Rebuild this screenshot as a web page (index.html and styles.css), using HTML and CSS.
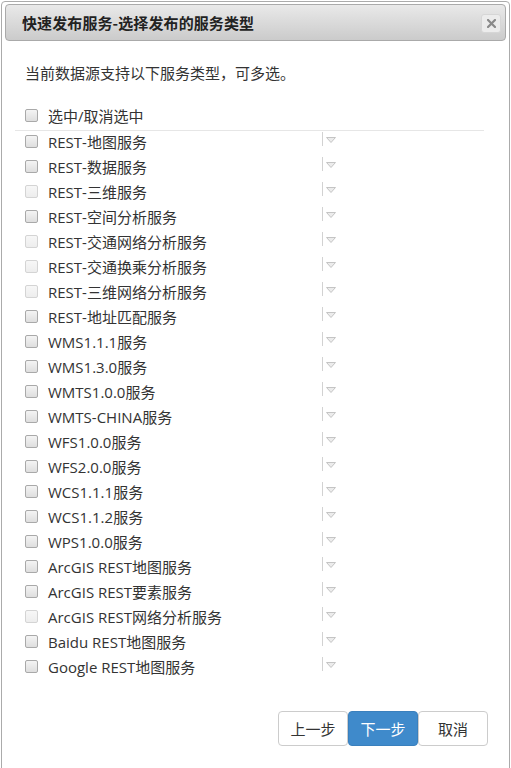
FILE: index.html
```html
<!DOCTYPE html>
<html lang="zh-CN">
<head>
<meta charset="utf-8">
<title>快速发布服务</title>
<link rel="stylesheet" href="styles.css">
</head>
<body>
<div class="dialog">
  <div class="titlebar">
    <span class="title">快速发布服务-选择发布的服务类型</span>
    <button class="close" type="button" aria-label="关闭">
      <svg width="9" height="9" viewBox="0 0 9 9"><path d="M1 1 L8 8 M8 1 L1 8" stroke="#8a8a8a" stroke-width="2.2" stroke-linecap="square"/></svg>
    </button>
  </div>
  <div class="body">
    <p class="intro">当前数据源支持以下服务类型，可多选。</p>
    <label class="all-row"><input type="checkbox" class="cb"><span>选中/取消选中</span></label>
    <ul class="list">
      <li class="row"><input type="checkbox" class="cb"><span class="name">REST-地图服务</span><span class="drop"><svg width="10" height="6" viewBox="0 0 10 6"><path d="M0.5 0.5 H9.5 L5 5.5 Z" fill="#ececec" stroke="#c4c4c4"/></svg></span></li>
      <li class="row"><input type="checkbox" class="cb"><span class="name">REST-数据服务</span><span class="drop"><svg width="10" height="6" viewBox="0 0 10 6"><path d="M0.5 0.5 H9.5 L5 5.5 Z" fill="#ececec" stroke="#c4c4c4"/></svg></span></li>
      <li class="row"><input type="checkbox" class="cb" disabled><span class="name">REST-三维服务</span><span class="drop"><svg width="10" height="6" viewBox="0 0 10 6"><path d="M0.5 0.5 H9.5 L5 5.5 Z" fill="#ececec" stroke="#c4c4c4"/></svg></span></li>
      <li class="row"><input type="checkbox" class="cb"><span class="name">REST-空间分析服务</span><span class="drop"><svg width="10" height="6" viewBox="0 0 10 6"><path d="M0.5 0.5 H9.5 L5 5.5 Z" fill="#ececec" stroke="#c4c4c4"/></svg></span></li>
      <li class="row"><input type="checkbox" class="cb" disabled><span class="name">REST-交通网络分析服务</span><span class="drop"><svg width="10" height="6" viewBox="0 0 10 6"><path d="M0.5 0.5 H9.5 L5 5.5 Z" fill="#ececec" stroke="#c4c4c4"/></svg></span></li>
      <li class="row"><input type="checkbox" class="cb" disabled><span class="name">REST-交通换乘分析服务</span><span class="drop"><svg width="10" height="6" viewBox="0 0 10 6"><path d="M0.5 0.5 H9.5 L5 5.5 Z" fill="#ececec" stroke="#c4c4c4"/></svg></span></li>
      <li class="row"><input type="checkbox" class="cb" disabled><span class="name">REST-三维网络分析服务</span><span class="drop"><svg width="10" height="6" viewBox="0 0 10 6"><path d="M0.5 0.5 H9.5 L5 5.5 Z" fill="#ececec" stroke="#c4c4c4"/></svg></span></li>
      <li class="row"><input type="checkbox" class="cb"><span class="name">REST-地址匹配服务</span><span class="drop"><svg width="10" height="6" viewBox="0 0 10 6"><path d="M0.5 0.5 H9.5 L5 5.5 Z" fill="#ececec" stroke="#c4c4c4"/></svg></span></li>
      <li class="row"><input type="checkbox" class="cb"><span class="name">WMS1.1.1服务</span><span class="drop"><svg width="10" height="6" viewBox="0 0 10 6"><path d="M0.5 0.5 H9.5 L5 5.5 Z" fill="#ececec" stroke="#c4c4c4"/></svg></span></li>
      <li class="row"><input type="checkbox" class="cb"><span class="name">WMS1.3.0服务</span><span class="drop"><svg width="10" height="6" viewBox="0 0 10 6"><path d="M0.5 0.5 H9.5 L5 5.5 Z" fill="#ececec" stroke="#c4c4c4"/></svg></span></li>
      <li class="row"><input type="checkbox" class="cb"><span class="name">WMTS1.0.0服务</span><span class="drop"><svg width="10" height="6" viewBox="0 0 10 6"><path d="M0.5 0.5 H9.5 L5 5.5 Z" fill="#ececec" stroke="#c4c4c4"/></svg></span></li>
      <li class="row"><input type="checkbox" class="cb"><span class="name">WMTS-CHINA服务</span><span class="drop"><svg width="10" height="6" viewBox="0 0 10 6"><path d="M0.5 0.5 H9.5 L5 5.5 Z" fill="#ececec" stroke="#c4c4c4"/></svg></span></li>
      <li class="row"><input type="checkbox" class="cb"><span class="name">WFS1.0.0服务</span><span class="drop"><svg width="10" height="6" viewBox="0 0 10 6"><path d="M0.5 0.5 H9.5 L5 5.5 Z" fill="#ececec" stroke="#c4c4c4"/></svg></span></li>
      <li class="row"><input type="checkbox" class="cb"><span class="name">WFS2.0.0服务</span><span class="drop"><svg width="10" height="6" viewBox="0 0 10 6"><path d="M0.5 0.5 H9.5 L5 5.5 Z" fill="#ececec" stroke="#c4c4c4"/></svg></span></li>
      <li class="row"><input type="checkbox" class="cb"><span class="name">WCS1.1.1服务</span><span class="drop"><svg width="10" height="6" viewBox="0 0 10 6"><path d="M0.5 0.5 H9.5 L5 5.5 Z" fill="#ececec" stroke="#c4c4c4"/></svg></span></li>
      <li class="row"><input type="checkbox" class="cb"><span class="name">WCS1.1.2服务</span><span class="drop"><svg width="10" height="6" viewBox="0 0 10 6"><path d="M0.5 0.5 H9.5 L5 5.5 Z" fill="#ececec" stroke="#c4c4c4"/></svg></span></li>
      <li class="row"><input type="checkbox" class="cb"><span class="name">WPS1.0.0服务</span><span class="drop"><svg width="10" height="6" viewBox="0 0 10 6"><path d="M0.5 0.5 H9.5 L5 5.5 Z" fill="#ececec" stroke="#c4c4c4"/></svg></span></li>
      <li class="row"><input type="checkbox" class="cb"><span class="name">ArcGIS REST地图服务</span><span class="drop"><svg width="10" height="6" viewBox="0 0 10 6"><path d="M0.5 0.5 H9.5 L5 5.5 Z" fill="#ececec" stroke="#c4c4c4"/></svg></span></li>
      <li class="row"><input type="checkbox" class="cb"><span class="name">ArcGIS REST要素服务</span><span class="drop"><svg width="10" height="6" viewBox="0 0 10 6"><path d="M0.5 0.5 H9.5 L5 5.5 Z" fill="#ececec" stroke="#c4c4c4"/></svg></span></li>
      <li class="row"><input type="checkbox" class="cb" disabled><span class="name">ArcGIS REST网络分析服务</span><span class="drop"><svg width="10" height="6" viewBox="0 0 10 6"><path d="M0.5 0.5 H9.5 L5 5.5 Z" fill="#ececec" stroke="#c4c4c4"/></svg></span></li>
      <li class="row"><input type="checkbox" class="cb"><span class="name">Baidu REST地图服务</span><span class="drop"><svg width="10" height="6" viewBox="0 0 10 6"><path d="M0.5 0.5 H9.5 L5 5.5 Z" fill="#ececec" stroke="#c4c4c4"/></svg></span></li>
      <li class="row"><input type="checkbox" class="cb"><span class="name">Google REST地图服务</span><span class="drop"><svg width="10" height="6" viewBox="0 0 10 6"><path d="M0.5 0.5 H9.5 L5 5.5 Z" fill="#ececec" stroke="#c4c4c4"/></svg></span></li>
    </ul>
    <div class="footer">
      <button type="button" class="btn">上一步</button>
      <button type="button" class="btn btn-primary">下一步</button>
      <button type="button" class="btn">取消</button>
    </div>
  </div>
</div>
</body>
</html>
```

FILE: styles.css
```css
html, body {
  margin: 0;
  padding: 0;
  background: #fff;
}
body {
  font-family: "Open Sans", "Noto Sans CJK SC", sans-serif;
  font-size: 15px;
  color: #333;
}
.dialog {
  box-sizing: border-box;
  width: 509px;
  height: 790px;
  margin: 1px 0 0 1px;
  padding: 2px 3px;
  border: 1px solid #ababab;
  border-radius: 4px;
  background: #fff;
}
.titlebar {
  box-sizing: border-box;
  height: 37px;
  display: flex;
  align-items: center;
  justify-content: space-between;
  padding: 0 4px 0 16px;
  border: 1px solid #aaa;
  border-radius: 4px;
  background: linear-gradient(#e9e9e9, #cbcbcb);
}
.title {
  font-family: "Noto Sans CJK SC", sans-serif;
  font-size: 15px;
  font-weight: bold;
  color: #222;
  letter-spacing: 0.1px;
}
.close {
  box-sizing: border-box;
  width: 20px;
  height: 19px;
  margin-top: 1px;
  padding: 0;
  display: flex;
  align-items: center;
  justify-content: center;
  border: 1px solid #d6d6d6;
  border-radius: 3px;
  background: #ececec;
}
.body {
  margin: 0 22px 0 10px;
}
.intro {
  margin: 22px 0 0;
  padding-left: 10px;
  line-height: 20px;
}
.all-row {
  box-sizing: border-box;
  height: 27px;
  margin-top: 21px;
  padding: 0 0 3px 10px;
  display: flex;
  align-items: center;
  border-bottom: 1px solid #e6e6e6;
}
.cb {
  -webkit-appearance: none;
  appearance: none;
  box-sizing: border-box;
  width: 13px;
  height: 13px;
  margin: 0 10px 0 0;
  flex: none;
  border: 1px solid #a9a9a9;
  border-radius: 2px;
  background: linear-gradient(#f4f4f4, #dedede);
}
.cb:disabled {
  border-color: #d4d4d4;
  background: linear-gradient(#f7f7f7, #ededed);
}
.list {
  list-style: none;
  margin: 0;
  padding: 0;
}
.row {
  box-sizing: border-box;
  height: 25px;
  padding: 0 0 4px 10px;
  display: flex;
  align-items: center;
}
.name {
  width: 274px;
  flex: none;
  white-space: nowrap;
}
.drop {
  align-self: flex-start;
  box-sizing: border-box;
  height: 14px;
  margin-top: 1px;
  padding: 5px 0 0 3px;
  border-left: 1px solid #d2d2d2;
  display: flex;
  align-items: flex-start;
}
.footer {
  display: flex;
  justify-content: flex-end;
  margin: 30px -4px 0 0;
}
.btn {
  box-sizing: border-box;
  width: 70px;
  height: 35px;
  padding: 0;
  border: 1px solid #ccc;
  border-radius: 4px;
  background: #fff;
  color: #333;
  font-family: "Noto Sans CJK SC", sans-serif;
  font-size: 15px;
}
.btn-primary {
  background: #3f8acb;
  border-color: #3a80bd;
  color: #fff;
}
```
